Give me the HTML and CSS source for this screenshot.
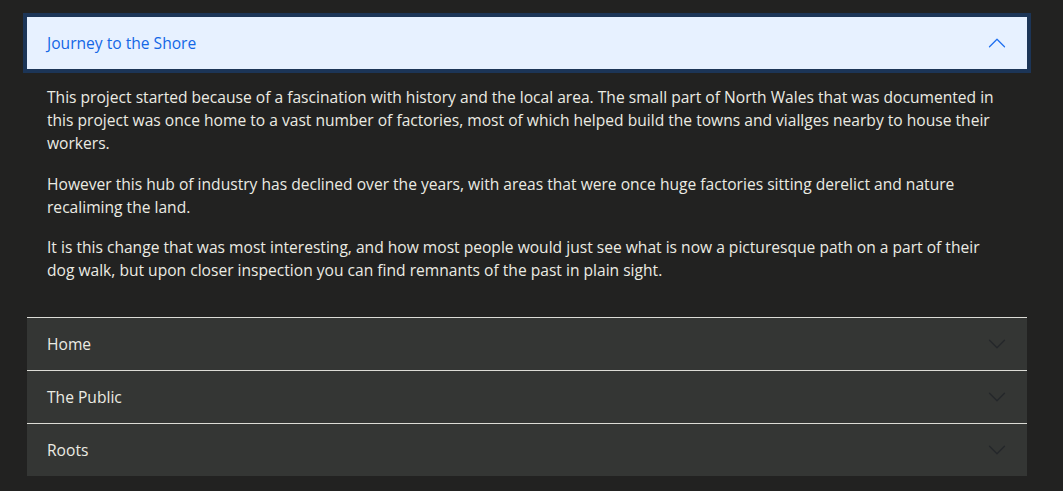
FILE: index.html
```html
<!DOCTYPE html>
<html lang="en">
<head>
<meta charset="utf-8">
<title>Accordion</title>
<link rel="stylesheet" href="styles.css">
</head>
<body>
<div class="page">
  <div class="accordion">
    <div class="item item-open">
      <button class="acc-btn acc-btn-active" type="button">
        <span>Journey to the Shore</span>
        <svg class="chev chev-up" viewBox="0 0 16 16" width="20" height="20" aria-hidden="true"><path d="M2 5L8 11L14 5" fill="none" stroke="currentColor" stroke-linecap="round" stroke-linejoin="round"/></svg>
      </button>
      <div class="acc-body">
        <p>This project started because of a fascination with history and the local area. The small part of North Wales that was documented in this project was once home to a vast number of factories, most of which helped build the towns and viallges nearby to house their workers.</p>
        <p>However this hub of industry has declined over the years, with areas that were once huge factories sitting derelict and nature recaliming the land.</p>
        <p>It is this change that was most interesting, and how most people would just see what is now a picturesque path on a part of their dog walk, but upon closer inspection you can find remnants of the past in plain sight.</p>
      </div>
    </div>
    <div class="item item-closed">
      <button class="acc-btn" type="button">
        <span>Home</span>
        <svg class="chev" viewBox="0 0 16 16" width="20" height="20" aria-hidden="true"><path d="M2 5L8 11L14 5" fill="none" stroke="currentColor" stroke-linecap="round" stroke-linejoin="round"/></svg>
      </button>
    </div>
    <div class="item item-closed">
      <button class="acc-btn" type="button">
        <span>The Public</span>
        <svg class="chev" viewBox="0 0 16 16" width="20" height="20" aria-hidden="true"><path d="M2 5L8 11L14 5" fill="none" stroke="currentColor" stroke-linecap="round" stroke-linejoin="round"/></svg>
      </button>
    </div>
    <div class="item item-closed">
      <button class="acc-btn" type="button">
        <span>Roots</span>
        <svg class="chev" viewBox="0 0 16 16" width="20" height="20" aria-hidden="true"><path d="M2 5L8 11L14 5" fill="none" stroke="currentColor" stroke-linecap="round" stroke-linejoin="round"/></svg>
      </button>
    </div>
  </div>
</div>
</body>
</html>
```
FILE: styles.css
```css
html, body {
  margin: 0;
  padding: 0;
}
body {
  background: #222221;
  color: #ebebe3;
  font-family: "Open Sans", "Noto Sans", sans-serif;
  font-size: 15.6px;
}
.page {
  padding: 17px 36px 0 27px;
}
.accordion {
  display: flex;
  flex-direction: column;
  width: 1000px;
}
.acc-btn {
  display: flex;
  align-items: center;
  justify-content: space-between;
  width: 100%;
  height: 52px;
  padding: 0 20px;
  margin: 0;
  border: 0;
  background: #343634;
  color: #ebebe3;
  font-family: inherit;
  font-size: 15.6px;
  line-height: 20px;
  text-align: left;
  box-sizing: border-box;
}
.acc-btn-active {
  background: #e7f1ff;
  color: #1367e6;
  box-shadow: 0 0 0 4px rgba(13, 110, 253, 0.25);
  position: relative;
  z-index: 1;
}
.chev {
  display: block;
  flex: none;
  color: #24272a;
}
.chev-up {
  transform: rotate(180deg);
  color: #1f6ff0;
}
.acc-body {
  padding: 17px 20px 17px 20px;
}
.acc-body p {
  margin: 0 0 17.5px 0;
  line-height: 23px;
}
.item-closed {
  border-top: 1px solid #dcdcd6;
  background: #343634;
}
```
